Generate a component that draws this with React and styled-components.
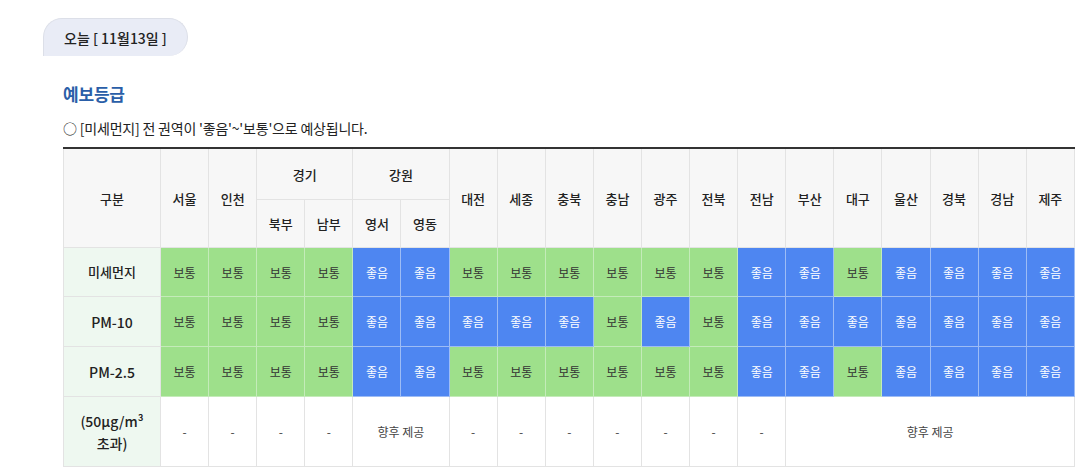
import React from "react";
import styled, { createGlobalStyle } from "styled-components";

const GlobalStyle = createGlobalStyle`
  html, body {
    margin: 0;
    padding: 0;
    background: #fff;
    font-family: "Noto Sans CJK KR", "Noto Sans", sans-serif;
    color: #222;
  }
`;

const Page = styled.div`
  padding: 18px 5px 0 43px;
`;

const DayTab = styled.div`
  display: inline-flex;
  align-items: center;
  height: 38px;
  box-sizing: border-box;
  padding: 0 20px;
  background: #e9ecf6;
  border: 1px solid #dcdfe8;
  border-bottom: 0;
  border-radius: 19px 19px 19px 0;
  font-size: 14px;
  font-weight: 500;
  color: #222;
`;

const Section = styled.div`
  padding-left: 20px;
`;

const Title = styled.h3`
  margin: 26px 0 0;
  font-size: 17px;
  font-weight: 700;
  color: #2a5ea8;
  line-height: 24px;
  letter-spacing: -0.2px;
`;

const Notice = styled.p`
  margin: 12px 0 0;
  font-size: 14px;
  line-height: 20px;
  color: #222;
  letter-spacing: -0.2px;
`;

const Table = styled.table`
  margin-top: 9px;
  width: 1012px;
  border-collapse: collapse;
  table-layout: fixed;
  border-top: 2px solid #333;
  font-size: 13px;
`;

const Th = styled.th`
  background: #f7f7f7;
  border: 1px solid #e3e3e3;
  font-weight: 500;
  color: #222;
  height: ${(p) => p.$h || 47}px;
  padding: 0;
  text-align: center;
`;

const RowHead = styled.th`
  background: #eef8f0;
  border: 1px solid #e3e3e3;
  font-size: ${(p) => (p.$latin ? 14 : 13)}px;
  font-weight: 500;
  color: #222;
  height: ${(p) => p.$h || 48}px;
  padding: 0;
  text-align: center;
  line-height: 22px;
`;

const levelColors = {
  보통: { bg: "#9ee08b", fg: "#333", line: "#c4ebb9" },
  좋음: { bg: "#4e86f1", fg: "#fff", line: "#9dbcf5" },
};

const Cell = styled.td`
  background: ${(p) => (p.$level ? levelColors[p.$level].bg : "#fff")};
  color: ${(p) => (p.$level ? levelColors[p.$level].fg : "#444")};
  border: 1px solid ${(p) => (p.$level ? levelColors[p.$level].line : "#e3e3e3")};
  font-size: 12px;
  text-align: center;
  padding: 0;
`;

const regions = [
  "서울", "인천", "북부", "남부", "영서", "영동", "대전", "세종", "충북", "충남",
  "광주", "전북", "전남", "부산", "대구", "울산", "경북", "경남", "제주",
];

const B = "보통";
const G = "좋음";

const rows = [
  { label: "미세먼지", latin: false, h: 48, data: [B, B, B, B, G, G, B, B, B, B, B, B, G, G, B, G, G, G, G] },
  { label: "PM-10", latin: true, h: 49, data: [B, B, B, B, G, G, G, G, G, B, G, B, G, G, G, G, G, G, G] },
  { label: "PM-2.5", latin: true, h: 49, data: [B, B, B, B, G, G, B, B, B, B, B, B, G, G, B, G, G, G, G] },
];

export default function App() {
  return (
    <>
      <GlobalStyle />
      <Page>
        <DayTab>오늘 [ 11월13일 ]</DayTab>
        <Section>
          <Title>예보등급</Title>
          <Notice>○ [미세먼지] 전 권역이 '좋음'~'보통'으로 예상됩니다.</Notice>
          <Table>
            <colgroup>
              <col style={{ width: 97 }} />
              {regions.map((r) => (
                <col key={r} />
              ))}
            </colgroup>
            <thead>
              <tr>
                <Th rowSpan={2}>구분</Th>
                <Th rowSpan={2}>서울</Th>
                <Th rowSpan={2}>인천</Th>
                <Th colSpan={2} $h={50}>경기</Th>
                <Th colSpan={2} $h={50}>강원</Th>
                {regions.slice(6).map((r) => (
                  <Th key={r} rowSpan={2}>{r}</Th>
                ))}
              </tr>
              <tr>
                <Th>북부</Th>
                <Th>남부</Th>
                <Th>영서</Th>
                <Th>영동</Th>
              </tr>
            </thead>
            <tbody>
              {rows.map((row) => (
                <tr key={row.label}>
                  <RowHead $latin={row.latin} $h={row.h}>
                    {row.label}
                  </RowHead>
                  {row.data.map((v, i) => (
                    <Cell key={i} $level={v}>{v}</Cell>
                  ))}
                </tr>
              ))}
              <tr>
                <RowHead $latin $h={69}>
                  (50µg/m³
                  <br />
                  초과)
                </RowHead>
                <Cell>-</Cell>
                <Cell>-</Cell>
                <Cell>-</Cell>
                <Cell>-</Cell>
                <Cell colSpan={2}>향후 제공</Cell>
                <Cell>-</Cell>
                <Cell>-</Cell>
                <Cell>-</Cell>
                <Cell>-</Cell>
                <Cell>-</Cell>
                <Cell>-</Cell>
                <Cell>-</Cell>
                <Cell colSpan={6}>향후 제공</Cell>
              </tr>
            </tbody>
          </Table>
        </Section>
      </Page>
    </>
  );
}
